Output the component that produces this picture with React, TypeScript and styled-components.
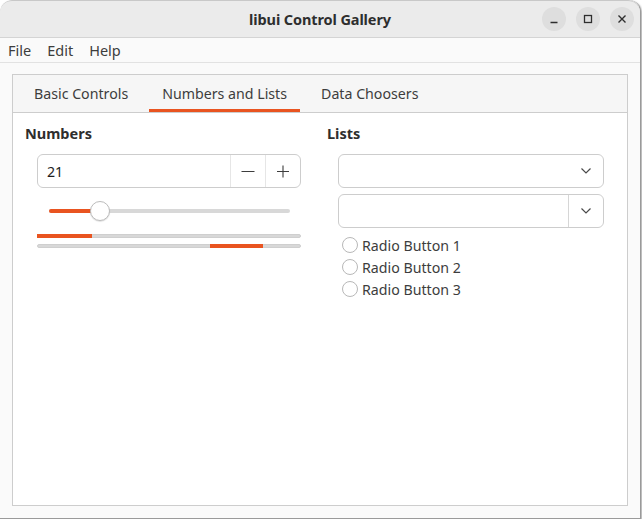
import React from "react";
import styled, { createGlobalStyle } from "styled-components";

const Global = createGlobalStyle`
  html, body { margin: 0; padding: 0; background: #ffffff; }
  body { font-family: "Noto Sans", "DejaVu Sans", sans-serif; color: #3d3d3d; }
  * { box-sizing: border-box; }
`;

const Window = styled.div`
  width: 641px;
  height: 519px;
  display: flex;
  flex-direction: column;
  background: #fafafa;
  border-radius: 12px 12px 0 0;
  border-right: 1px solid #9a9a9a;
  border-bottom: 1px solid #9a9a9a;
  box-shadow: 1px 1px 2px rgba(0, 0, 0, 0.35);
  overflow: hidden;
`;

const TitleBar = styled.div`
  height: 38px;
  flex: none;
  background: #ebebeb;
  border-bottom: 1px solid #d4d4d4;
  border-top: 1px solid #c8c8c8;
  border-radius: 12px 12px 0 0;
  display: flex;
  align-items: center;
  justify-content: center;
  position: relative;
`;

const Title = styled.div`
  font-weight: 700;
  font-size: 14.5px;
  color: #2e2e2e;
  letter-spacing: -0.1px;
`;

const Controls = styled.div`
  position: absolute;
  right: 6px;
  top: 6px;
  display: flex;
  gap: 10px;
`;

const CtlButton = styled.div`
  width: 24px;
  height: 24px;
  border-radius: 50%;
  background: #dedede;
  display: flex;
  align-items: center;
  justify-content: center;
`;

const MenuBar = styled.div`
  height: 25px;
  flex: none;
  display: flex;
  align-items: center;
  border-bottom: 1px solid #e2e2e2;
  background: #fafafa;
`;

const MenuItem = styled.div`
  padding: 0 8px;
  font-size: 14.5px;
  color: #3d3d3d;
  line-height: 24px;
`;

const Content = styled.div`
  flex: 1;
  padding: 11px 12px 12px 12px;
  display: flex;
`;

const Notebook = styled.div`
  flex: 1;
  border: 1px solid #cdcdcd;
  display: flex;
  flex-direction: column;
  background: #ffffff;
`;

const TabBar = styled.div`
  height: 38px;
  flex: none;
  display: flex;
  padding: 0 4px;
  background: #f6f6f6;
  border-bottom: 1px solid #cdcdcd;
`;

const Tab = styled.div<{ $active?: boolean }>`
  margin: 0 4px;
  padding: 2px 13px 0;
  font-size: 14.2px;
  color: #3d3d3d;
  display: flex;
  align-items: center;
  border-bottom: 3px solid ${(p) => (p.$active ? "#e95420" : "transparent")};
`;

const Page = styled.div`
  flex: 1;
  padding: 10px 12px;
  display: grid;
  grid-template-columns: 1fr 1fr;
  column-gap: 14px;
  align-items: start;
`;

const Group = styled.div`
  display: flex;
  flex-direction: column;
`;

const GroupTitle = styled.div`
  font-weight: 700;
  font-size: 14.5px;
  color: #2e2e2e;
  line-height: 20px;
  margin-bottom: 11px;
`;

const GroupBody = styled.div<{ $left: number; $right: number }>`
  padding: 0 ${(p) => p.$right}px 0 ${(p) => p.$left}px;
  display: flex;
  flex-direction: column;
`;

const SpinBox = styled.div`
  height: 34px;
  border: 1px solid #cdcdcd;
  border-radius: 6px;
  display: flex;
  background: #ffffff;
`;

const SpinText = styled.div`
  flex: 1;
  display: flex;
  align-items: center;
  padding-left: 9px;
  font-size: 14.2px;
  color: #1e1e1e;
`;

const SpinButton = styled.div`
  width: 35px;
  border-left: 1px solid #e6e6e6;
  display: flex;
  align-items: center;
  justify-content: center;
`;

const SliderRow = styled.div`
  margin: 13px 11px 0 12px;
  height: 20px;
  position: relative;
  display: flex;
  align-items: center;
`;

const Track = styled.div`
  flex: 1;
  height: 4px;
  border-radius: 2px;
  background: #d8d8d8;
  position: relative;
`;

const TrackFill = styled.div`
  position: absolute;
  left: 0;
  top: 0;
  bottom: 0;
  background: #e95420;
  border-radius: 2px;
`;

const Knob = styled.div`
  position: absolute;
  top: 0;
  width: 20px;
  height: 20px;
  margin-left: -10px;
  border-radius: 50%;
  background: #ffffff;
  border: 1px solid #bcbcbc;
  box-shadow: 0 1px 1px rgba(0, 0, 0, 0.12);
`;

const Progress = styled.div<{ $top: number }>`
  margin-top: ${(p) => p.$top}px;
  height: 4px;
  border-radius: 2px;
  background: #d8d8d8;
  border: 1px solid #cfcfcf;
  position: relative;
`;

const ProgressFill = styled.div`
  position: absolute;
  top: -1px;
  bottom: -1px;
  background: #e95420;
`;

const Combo = styled.div<{ $top: number }>`
  margin-top: ${(p) => p.$top}px;
  height: 34px;
  border: 1px solid #cdcdcd;
  border-radius: 6px;
  display: flex;
  background: #ffffff;
`;

const ComboText = styled.div`
  flex: 1;
`;

const ComboArrow = styled.div<{ $sep?: boolean }>`
  width: 35px;
  border-left: 1px solid ${(p) => (p.$sep ? "#d6d6d6" : "transparent")};
  display: flex;
  align-items: center;
  justify-content: center;
`;

const RadioList = styled.div`
  margin-top: 6px;
  padding-left: 4px;
  display: flex;
  flex-direction: column;
`;

const RadioRow = styled.div`
  height: 22px;
  display: flex;
  align-items: center;
  gap: 4px;
  font-size: 14.2px;
  color: #3d3d3d;
`;

const RadioCircle = styled.div`
  width: 16px;
  height: 16px;
  border-radius: 50%;
  border: 1px solid #b8b8b8;
  background: #ffffff;
`;

const Chevron = () => (
  <svg width="12" height="8" viewBox="0 0 12 8">
    <path d="M1.5 1.5 L6 6 L10.5 1.5" fill="none" stroke="#4a4a4a" strokeWidth="1.2" />
  </svg>
);

export default function App() {
  return (
    <>
      <Global />
      <Window>
        <TitleBar>
          <Title>libui Control Gallery</Title>
          <Controls>
            <CtlButton>
              <svg width="12" height="12" viewBox="0 0 12 12">
                <path d="M2.5 9.5 H9.5" stroke="#2e2e2e" strokeWidth="1.5" />
              </svg>
            </CtlButton>
            <CtlButton>
              <svg width="12" height="12" viewBox="0 0 12 12">
                <rect x="2.5" y="2.5" width="7" height="7" fill="none" stroke="#2e2e2e" strokeWidth="1.3" />
              </svg>
            </CtlButton>
            <CtlButton>
              <svg width="12" height="12" viewBox="0 0 12 12">
                <path d="M2.5 2.5 L9.5 9.5 M9.5 2.5 L2.5 9.5" stroke="#2e2e2e" strokeWidth="1.4" />
              </svg>
            </CtlButton>
          </Controls>
        </TitleBar>
        <MenuBar>
          <MenuItem>File</MenuItem>
          <MenuItem>Edit</MenuItem>
          <MenuItem>Help</MenuItem>
        </MenuBar>
        <Content>
          <Notebook>
            <TabBar>
              <Tab>Basic Controls</Tab>
              <Tab $active>Numbers and Lists</Tab>
              <Tab>Data Choosers</Tab>
            </TabBar>
            <Page>
              <Group>
                <GroupTitle>Numbers</GroupTitle>
                <GroupBody $left={12} $right={12}>
                  <SpinBox>
                    <SpinText>21</SpinText>
                    <SpinButton>
                      <svg width="16" height="16" viewBox="0 0 16 16">
                        <path d="M1.5 8.5 H14.5" stroke="#3d3d3d" strokeWidth="1.1" />
                      </svg>
                    </SpinButton>
                    <SpinButton>
                      <svg width="16" height="16" viewBox="0 0 16 16">
                        <path d="M2 8.5 H14 M8 2.5 V14.5" stroke="#3d3d3d" strokeWidth="1.1" />
                      </svg>
                    </SpinButton>
                  </SpinBox>
                  <SliderRow>
                    <Track>
                      <TrackFill style={{ width: "21%" }} />
                    </Track>
                    <Knob style={{ left: "21%" }} />
                  </SliderRow>
                  <Progress $top={13}>
                    <ProgressFill style={{ left: -1, width: "21%" }} />
                  </Progress>
                  <Progress $top={6}>
                    <ProgressFill style={{ left: "65.5%", width: "20.5%" }} />
                  </Progress>
                </GroupBody>
              </Group>
              <Group>
                <GroupTitle>Lists</GroupTitle>
                <GroupBody $left={11} $right={11}>
                  <Combo $top={0}>
                    <ComboText />
                    <ComboArrow>
                      <Chevron />
                    </ComboArrow>
                  </Combo>
                  <Combo $top={6}>
                    <ComboText />
                    <ComboArrow $sep>
                      <Chevron />
                    </ComboArrow>
                  </Combo>
                  <RadioList>
                    <RadioRow>
                      <RadioCircle />
                      Radio Button 1
                    </RadioRow>
                    <RadioRow>
                      <RadioCircle />
                      Radio Button 2
                    </RadioRow>
                    <RadioRow>
                      <RadioCircle />
                      Radio Button 3
                    </RadioRow>
                  </RadioList>
                </GroupBody>
              </Group>
            </Page>
          </Notebook>
        </Content>
      </Window>
    </>
  );
}
